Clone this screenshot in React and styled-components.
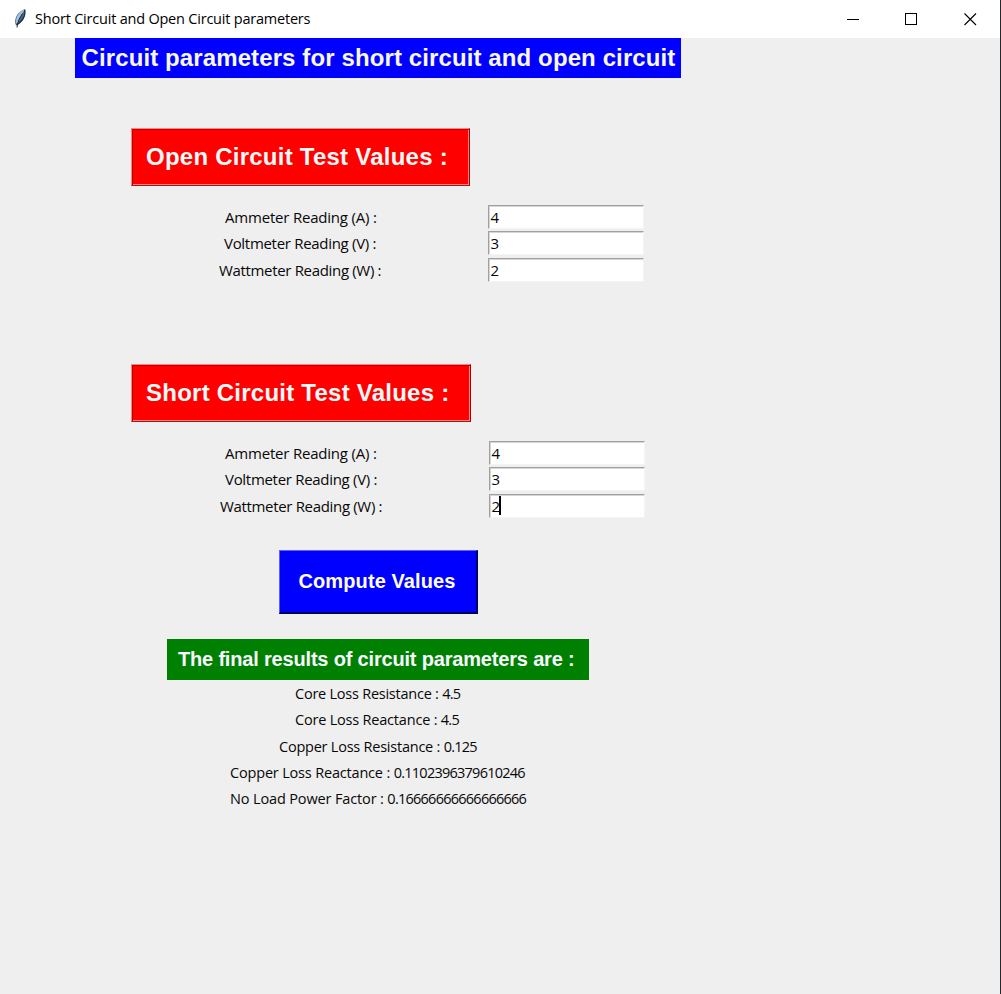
import React from "react";
import styled, { createGlobalStyle } from "styled-components";

const GlobalStyle = createGlobalStyle`
  * { box-sizing: border-box; }
  body { margin: 0; overflow: hidden; background: #efefef; }
`;

const Window = styled.div`
  width: 1001px;
  height: 994px;
  background: #efefef;
  border-right: 1px solid #262728;
  font-family: "Open Sans", "Noto Sans", sans-serif;
  font-size: 14.5px;
  color: #080808;
`;

const TitleBar = styled.header`
  display: flex;
  align-items: center;
  height: 38px;
  padding-left: 12px;
  background: #ffffff;
`;

const Caption = styled.span`
  flex: 1;
  padding-left: 7px;
  color: #000;
  line-height: 20px;
  white-space: nowrap;
  letter-spacing: -0.21px;
`;

const WindowButton = styled.span`
  display: flex;
  align-items: center;
  justify-content: center;
  width: 58.5px;
  height: 38px;
  padding-right: ${(p) => p.$nudge || 0}px;
`;

const Content = styled.main`
  display: flex;
  flex-direction: column;
  align-items: center;
  width: 606px;
  margin-left: 75px;
`;

const Banner = styled.h1`
  display: flex;
  align-items: center;
  width: ${(p) => p.$width}px;
  height: ${(p) => p.$height}px;
  margin: ${(p) => p.$top || 0}px 0 0;
  padding-left: ${(p) => p.$inset}px;
  background: ${(p) => p.$color};
  color: #f8f8ff;
  font: bold ${(p) => p.$size}px "Liberation Sans", Arial, sans-serif;
  letter-spacing: ${(p) => p.$track || 0}px;
  white-space: nowrap;
`;

const Section = styled.section`
  width: 100%;
  margin-top: ${(p) => p.$top}px;
  padding-left: 56px;
`;

const SectionTitle = styled.h2`
  display: flex;
  align-items: center;
  width: ${(p) => p.$width}px;
  height: 58px;
  margin: 0 0 18px;
  padding: 0 0 0 14px;
  border: 1px solid;
  border-color: #ff8080 #a80000 #b81010 #ff8080;
  box-shadow: inset 1px 1px 0 #c00000, inset -1px -1px 0 #ff8585;
  background: #ff0000;
  color: #fffafa;
  font: bold 24px "Liberation Sans", Arial, sans-serif;
  letter-spacing: ${(p) => p.$track || 0}px;
  white-space: nowrap;
`;

const FieldRow = styled.label`
  display: grid;
  grid-template-columns: ${(p) => p.$column}px 156px;
  align-items: center;
  height: 26.25px;
  font-size: 15px;
`;

const FieldLabel = styled.span`
  padding-left: ${(p) => p.$inset}px;
  letter-spacing: ${(p) => p.$track}px;
  line-height: 20px;
  white-space: nowrap;
`;

const Entry = styled.span`
  display: flex;
  align-items: center;
  height: 24px;
  padding-left: 1.5px;
  border: 1px solid;
  border-color: #a0a0a0 #f4f4f4 #f4f4f4 #a0a0a0;
  box-shadow: inset 1px 1px 0 #d6d6d6;
  background: #ffffff;
  line-height: 20px;
`;

const Caret = styled.i`
  width: 2px;
  height: 19px;
  margin-left: -1px;
  background: #000;
`;

const ComputeButton = styled.button`
  display: flex;
  align-items: center;
  width: 199px;
  height: 64px;
  margin-top: 31.5px;
  padding: 0 0 0 19px;
  border: 2px solid;
  border-color: #5c5cff #00006a #00005a #5c5cff;
  border-width: 1px 2px 2px 1px;
  background: #0000ff;
  color: #fff;
  font: bold 20px "Liberation Sans", Arial, sans-serif;
  letter-spacing: 0.1px;
  white-space: nowrap;
`;

const Results = styled.div`
  width: 100%;
  padding-top: 0.75px;
`;

const Result = styled.p`
  height: 26.25px;
  margin: 0;
  padding-left: ${(p) => p.$inset}px;
  line-height: 26px;
  letter-spacing: ${(p) => p.$track}px;
  white-space: pre;
`;

const ResultValue = styled.span`
  letter-spacing: -0.75px;
`;

const Feather = () => (
  <svg width="16" height="20" viewBox="0 0 16 20">
    <path d="M12.7 .5C9 1 5 5 3.600 9.500c-.7 2.400-.6 4.700.3 6.500 3.800-1 7.400-4.500 8.600-8.500C13.300 4.800 13.300 2 12.700.5Z" fill="#41668c" />
    <path d="M12.700.5C9.500 1.200 6 4.800 4.300 9.500l-.5 4.500 1.500.5C7.500 9.500 10 5 12.700.5Z" fill="#a5c3dc" />
    <path d="M12.700.5C13.500 4 12.300 8.500 9.800 11.500c-1.700 2.200-3.500 3.800-5.500 4.500" fill="none" stroke="#172434" strokeWidth="1.200" />
    <path d="M10.500 4.500C8 8 5.500 12.500 5 18.500" fill="none" stroke="#26292e" strokeWidth="1" />
  </svg>
);

const openFields = [
  { label: "Ammeter Reading (A) :", value: "4", inset: 94, track: -0.2 },
  { label: "Voltmeter Reading (V) :", value: "3", inset: 93, track: -0.3 },
  { label: "Wattmeter Reading (W) :", value: "2", inset: 88, track: -0.33 },
];

const shortFields = [
  { label: "Ammeter Reading (A) :", value: "4", inset: 94, track: -0.2 },
  { label: "Voltmeter Reading (V) :", value: "3", inset: 94, track: -0.3 },
  { label: "Wattmeter Reading (W) :", value: "2", inset: 89, track: -0.33, focused: true },
];

const results = [
  { name: "Core Loss Resistance", value: "4.5", inset: 220, track: -0.24 },
  { name: "Core Loss Reactance", value: "4.5", inset: 220, track: -0.2 },
  { name: "Copper Loss Resistance", value: "0.125", inset: 204, track: -0.23 },
  { name: "Copper Loss Reactance", value: "0.1102396379610246", inset: 155, track: -0.18 },
  { name: "No Load Power Factor", value: "0.16666666666666666", inset: 155, track: -0.14 },
];

const Fields = ({ items, column }) =>
  items.map((f) => (
    <FieldRow key={f.label} $column={column}>
      <FieldLabel $inset={f.inset} $track={f.track}>{f.label}</FieldLabel>
      <Entry>
        {f.value}
        {f.focused && <Caret />}
      </Entry>
    </FieldRow>
  ));

export default function App() {
  return (
    <Window>
      <GlobalStyle />
      <TitleBar>
        <Feather />
        <Caption>Short Circuit and Open Circuit parameters</Caption>
        <WindowButton>
          <svg width="13" height="13"><path d="M0 6.500h12" stroke="#000" /></svg>
        </WindowButton>
        <WindowButton $nudge={2}>
          <svg width="13" height="13"><rect x=".5" y=".5" width="11" height="11" fill="none" stroke="#000" /></svg>
        </WindowButton>
        <WindowButton>
          <svg width="13" height="13"><path d="M.5.5l11.500 11.500M12 .5L.5 12" stroke="#000" strokeWidth="1.100" /></svg>
        </WindowButton>
      </TitleBar>
      <Content>
        <Banner $width={606} $height={40} $inset={6.5} $size={24} $track={0.11} $color="#0000ff">
          Circuit parameters for short circuit and open circuit
        </Banner>
        <Section $top={50}>
          <SectionTitle $width={339} $track={0.24}>Open Circuit Test Values :</SectionTitle>
          <Fields items={openFields} column={357} />
        </Section>
        <Section $top={81.25}>
          <SectionTitle $width={340} $track={0.24}>Short Circuit Test Values :</SectionTitle>
          <Fields items={shortFields} column={358} />
        </Section>
        <ComputeButton type="button">Compute Values</ComputeButton>
        <Banner as="h2" $width={422} $height={41} $top={25} $inset={11} $size={20} $track={-0.18} $color="#008000">
          The final results of circuit parameters are :
        </Banner>
        <Results>
          {results.map((r) => (
            <Result key={r.name} $inset={r.inset} $track={r.track}>
              {r.name} : <ResultValue>{r.value}</ResultValue>
            </Result>
          ))}
        </Results>
      </Content>
    </Window>
  );
}
